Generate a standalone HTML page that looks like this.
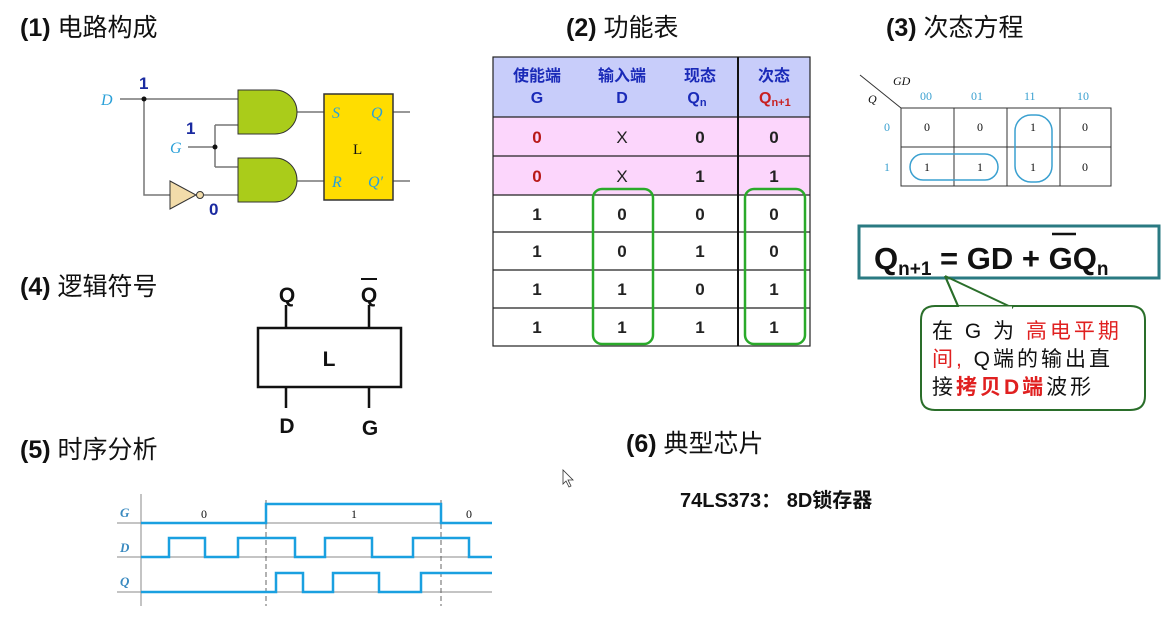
<!DOCTYPE html><html><head><meta charset="utf-8"><style>
body{margin:0;width:1171px;height:616px;background:#fff;overflow:hidden;font-family:"Liberation Sans","Noto Sans CJK SC",sans-serif}
</style></head><body>
<svg width="1171" height="616" viewBox="0 0 1171 616" xmlns="http://www.w3.org/2000/svg" font-family="Liberation Sans, Noto Sans CJK SC, sans-serif">
<g font-size="25" fill="#111">
<text x="20" y="36"><tspan font-weight="bold">(1)</tspan> 电路构成</text>
<text x="566" y="36"><tspan font-weight="bold">(2)</tspan> 功能表</text>
<text x="886" y="36"><tspan font-weight="bold">(3)</tspan> 次态方程</text>
<text x="20" y="295"><tspan font-weight="bold">(4)</tspan> 逻辑符号</text>
<text x="20" y="458"><tspan font-weight="bold">(5)</tspan> 时序分析</text>
<text x="626" y="452"><tspan font-weight="bold">(6)</tspan> 典型芯片</text>
</g>
<text x="680" y="507" font-size="20" font-weight="bold" fill="#111">74LS373：  8D锁存器</text>
<!-- circuit -->
<g stroke="#777" stroke-width="1.5" fill="none">
<path d="M120 99H238M144 99V195H172M204 195H238M188 147H215M215 125V167M215 125H238M215 167H238M297 112H324M297 181H324M393 112H410M393 181H410"/>
</g>
<circle cx="144" cy="99" r="2.5" fill="#111"/><circle cx="215" cy="147" r="2.5" fill="#111"/>
<path d="M238 90H275A22 22 0 0 1 275 134H238Z" fill="#aacc1a" stroke="#333"/>
<path d="M238 158H275A22 22 0 0 1 275 202H238Z" fill="#aacc1a" stroke="#333"/>
<path d="M170 181L196 195L170 209Z" fill="#f2dcaa" stroke="#333"/>
<circle cx="200" cy="195" r="3.5" fill="#f2dcaa" stroke="#333"/>
<rect x="324" y="94" width="69" height="106" fill="#ffdd00" stroke="#333" stroke-width="1.5"/>
<g font-family="Liberation Serif, serif" font-style="italic" font-size="16" fill="#2aa0d8">
<text x="101" y="105">D</text><text x="170" y="153">G</text>
<text x="332" y="118">S</text><text x="371" y="118">Q</text><text x="332" y="187">R</text><text x="368" y="187">Q′</text>
</g>
<text x="353" y="154" font-family="Liberation Serif,serif" font-size="15" fill="#111">L</text>
<g font-size="17" font-weight="bold" fill="#1a2aa0"><text x="139" y="89">1</text><text x="186" y="134">1</text><text x="209" y="215">0</text></g>
<!-- table -->
<rect x="493" y="57" width="317" height="60" fill="#c8cdfa"/>
<rect x="493" y="117" width="317" height="78" fill="#fcd6fc"/>
<g stroke="#222" stroke-width="1.2" fill="none">
<rect x="493" y="57" width="317" height="289"/>
<path d="M493 117H810M493 156H810M493 195H810M493 232H810M493 270H810M493 308H810"/>
</g>
<path d="M738 57V346" stroke="#111" stroke-width="2"/>
<g font-size="16" font-weight="bold" fill="#1a2ab8" text-anchor="middle">
<text x="537" y="81">使能端</text><text x="537" y="103">G</text>
<text x="622" y="81">输入端</text><text x="622" y="103">D</text>
<text x="700" y="81">现态</text><text x="697" y="103">Q<tspan font-size="11" dy="3">n</tspan></text>
<text x="774" y="81">次态</text>
</g>
<text x="759" y="103" font-size="16" font-weight="bold" fill="#c82020">Q<tspan font-size="11" dy="3">n+1</tspan></text>
<g font-size="17" font-weight="bold" fill="#222" text-anchor="middle">
<text x="537" y="143" fill="#b81818">0</text><text x="622" y="143" font-weight="normal">X</text><text x="700" y="143">0</text><text x="774" y="143">0</text>
<text x="537" y="182" fill="#b81818">0</text><text x="622" y="182" font-weight="normal">X</text><text x="700" y="182">1</text><text x="774" y="182">1</text>
<text x="537" y="220">1</text><text x="622" y="220">0</text><text x="700" y="220">0</text><text x="774" y="220">0</text>
<text x="537" y="257">1</text><text x="622" y="257">0</text><text x="700" y="257">1</text><text x="774" y="257">0</text>
<text x="537" y="295">1</text><text x="622" y="295">1</text><text x="700" y="295">0</text><text x="774" y="295">1</text>
<text x="537" y="333">1</text><text x="622" y="333">1</text><text x="700" y="333">1</text><text x="774" y="333">1</text>
</g>
<rect x="593" y="189" width="60" height="155" rx="9" fill="none" stroke="#2aaa2a" stroke-width="2.5"/>
<rect x="745" y="189" width="60" height="155" rx="9" fill="none" stroke="#2aaa2a" stroke-width="2.5"/>
<!-- kmap -->
<g stroke="#333" stroke-width="1" fill="none">
<rect x="901" y="108" width="210" height="78"/><path d="M901 147H1111M954 108V186M1007 108V186M1060 108V186M860 75L901 108"/>
</g>
<g font-family="Liberation Serif,serif" font-size="12" fill="#111">
<text x="893" y="85" font-style="italic">GD</text><text x="868" y="103" font-style="italic">Q</text>
<g fill="#3aa0d0"><text x="920" y="100">00</text><text x="971" y="100">01</text><text x="1024" y="100">11</text><text x="1077" y="100">10</text><text x="884" y="131">0</text><text x="884" y="171">1</text></g>
<g text-anchor="middle"><text x="927" y="131">0</text><text x="980" y="131">0</text><text x="1033" y="131">1</text><text x="1085" y="131">0</text><text x="927" y="171">1</text><text x="980" y="171">1</text><text x="1033" y="171">1</text><text x="1085" y="171">0</text></g>
</g>
<rect x="910" y="154" width="88" height="26" rx="13" fill="none" stroke="#3aa0d0" stroke-width="1.5"/>
<rect x="1015" y="115" width="37" height="67" rx="16" fill="none" stroke="#3aa0d0" stroke-width="1.5"/>
<!-- formula -->
<rect x="859" y="226" width="300" height="52" fill="#fff" stroke="#2a7a82" stroke-width="3"/>
<text x="874" y="269" font-size="31" font-weight="bold" fill="#111">Q<tspan font-size="19" dy="6">n+1</tspan><tspan dy="-6"> = GD + </tspan><tspan id="g">G</tspan>Q<tspan font-size="19" dy="6">n</tspan></text>
<path d="M1052 234H1076" stroke="#111" stroke-width="2.5"/>
<path d="M945 276L958 306H1130Q1145 306 1145 320V396Q1145 410 1130 410H935Q921 410 921 396V320Q921 306 935 306H958" fill="#fff" stroke="#2a6e2a" stroke-width="2"/>
<path d="M945 276L958 306" stroke="#2a6e2a" stroke-width="2"/><path d="M945 276L1013 308" stroke="#2a6e2a" stroke-width="2"/>
<path d="M959 308H1012" stroke="#fff" stroke-width="3"/>
<g font-size="21" fill="#111" letter-spacing="3">
<text x="932" y="338">在 G 为 <tspan fill="#e02020">高电平期</tspan></text>
<text x="932" y="366"><tspan fill="#e02020">间,</tspan> Q端的输出直</text>
<text x="932" y="394">接<tspan fill="#e02020" font-weight="bold">拷贝D端</tspan>波形</text>
</g>
<!-- logic symbol -->
<rect x="258" y="328" width="143" height="59" fill="none" stroke="#111" stroke-width="2.5"/>
<path d="M286 305V328M369 305V328M286 387V408M369 387V408" stroke="#111" stroke-width="2.5"/>
<g font-size="21" font-weight="bold" fill="#111" text-anchor="middle">
<text x="287" y="302">Q</text><text x="369" y="302">Q</text><text x="329" y="366">L</text><text x="287" y="433">D</text><text x="370" y="435">G</text></g>
<path d="M361 279H377" stroke="#111" stroke-width="2"/>
<!-- timing -->
<g stroke="#888" stroke-width="1" fill="none"><path d="M141 494V606M117 523H492M117 557H492M117 592H492"/></g>
<g stroke="#666" stroke-width="1" stroke-dasharray="5 3"><path d="M266 500V606M441 500V606"/></g>
<g stroke="#1aa0e0" stroke-width="2.5" fill="none">
<path d="M141 523H266V504H441V523H492"/>
<path d="M141 557H169V538H205V557H238V538H295V557H325V538H372V557H413V538H469V557H492"/>
<path d="M141 592H276V573H303V592H333V573H379V592H421V573H492"/>
</g>
<g font-family="Liberation Serif,serif" font-style="italic" font-weight="bold" font-size="13" fill="#3a8ac0"><text x="120" y="517">G</text><text x="120" y="552">D</text><text x="120" y="586">Q</text></g>
<g font-family="Liberation Serif,serif" font-size="12" fill="#111"><text x="201" y="518">0</text><text x="351" y="518">1</text><text x="466" y="518">0</text></g>
<path d="M563 470V484L566 481L569 487L571 486L568 480L573 480Z" fill="#fff" stroke="#333" stroke-width="0.8"/>
</svg>
</body></html>
